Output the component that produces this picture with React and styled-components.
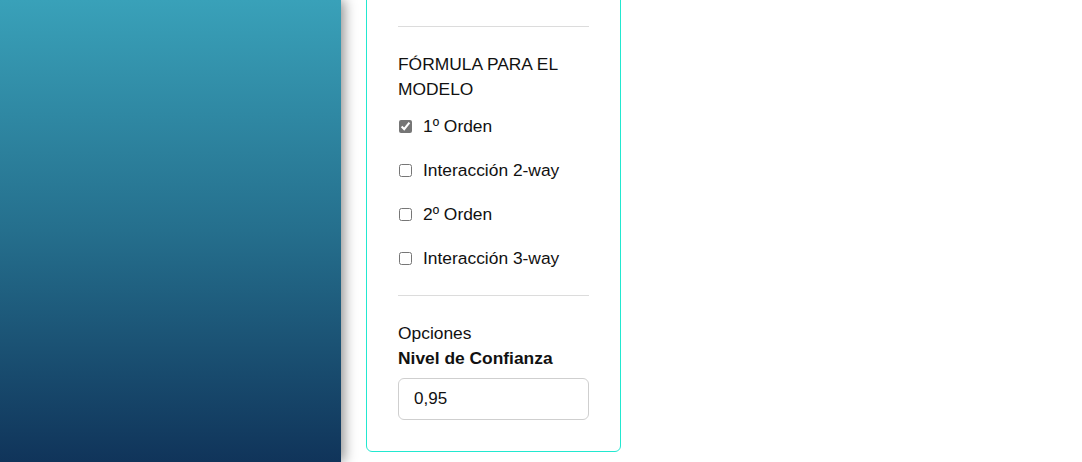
import styled, { createGlobalStyle } from 'styled-components';

/* base de la página */
const GlobalStyle = createGlobalStyle`
  html, body { margin: 0; padding: 0; height: 100%; }
  body {
    font-family: 'Liberation Sans', Arial, sans-serif;
    color: #111;
    background: #fff;
  }
`

const Layout = styled.div`
  display: flex;
  height: 100vh;
  overflow: hidden;
`

const Sidebar = styled.aside`
  flex: 0 0 341px;
  height: 100%;
  background: linear-gradient(180deg, #39a1b9 0%, #256f8d 50%, #10345a 100%);
  box-shadow: 3px 0 12px rgba(0, 0, 0, 0.45);
  position: relative;
  z-index: 1;
`

const Main = styled.main`
  flex: 1;
  display: flex;
  flex-direction: column;
  justify-content: flex-end;
  padding: 0 0 10px 25px;
`

const Panel = styled.section`
  flex: 0 0 auto;
  width: 255px;
  box-sizing: border-box;
  padding: 40px 31px 31px;
  border: 1px solid #22e8d0;
  border-radius: 6px;
  background: #fff;
`

const Rule = styled.hr`
  margin: 0;
  border: 0;
  border-top: 1px solid #dcdcdc;
`

const Heading = styled.h3`
  margin: 25px 0 2px;
  font-size: 17.4px;
  font-weight: normal;
  line-height: 25px;
  text-transform: uppercase;
`

const CheckList = styled.div`
  display: flex;
  flex-direction: column;
  margin-bottom: 15px;
`

const CheckRow = styled.label`
  display: flex;
  align-items: center;
  gap: 11px;
  height: 44px;
  font-size: 17.4px;
  cursor: pointer;
  input {
    width: 13px; height: 13px;
    margin: 0 0 0 1px;
    accent-color: #767676;
  }
`

const Options = styled.div`
  padding-top: 25px;
  font-size: 17.4px;
  line-height: 25px;
`

const FieldLabel = styled.label`
  display: block;
  font-weight: bold;
`

const NumberInput = styled.input`
  display: block;
  width: 100%;
  height: 42px;
  box-sizing: border-box;
  margin-top: 7px;
  padding: 0 15px;
  border: 1px solid #cfcfcf;
  border-radius: 6px;
  font-family: inherit;
  font-size: 17px;
  color: #111;
  outline: none;
`

const formulas = [
  { id: 'primer', label: '1º Orden', checked: true },
  { id: 'int2', label: 'Interacción 2-way' },
  { id: 'segundo', label: '2º Orden' },
  { id: 'int3', label: 'Interacción 3-way' },
]

const App = () => {
  return <>
    <GlobalStyle />
    <Layout>
      <Sidebar />
      <Main>
        <Panel>
          <Rule />
          <Heading>Fórmula para el modelo</Heading>
          <CheckList>
            {formulas.map(f => (
              <CheckRow key={f.id}>
                <input type="checkbox" defaultChecked={!!f.checked} />
                {f.label}
              </CheckRow>
            ))}
          </CheckList>
          <Rule />
          <Options>
            <div>Opciones</div>
            <FieldLabel htmlFor="confianza">Nivel de Confianza</FieldLabel>
            <NumberInput id="confianza" defaultValue="0,95" />
          </Options>
        </Panel>
      </Main>
    </Layout>
  </>
}

export default App;
